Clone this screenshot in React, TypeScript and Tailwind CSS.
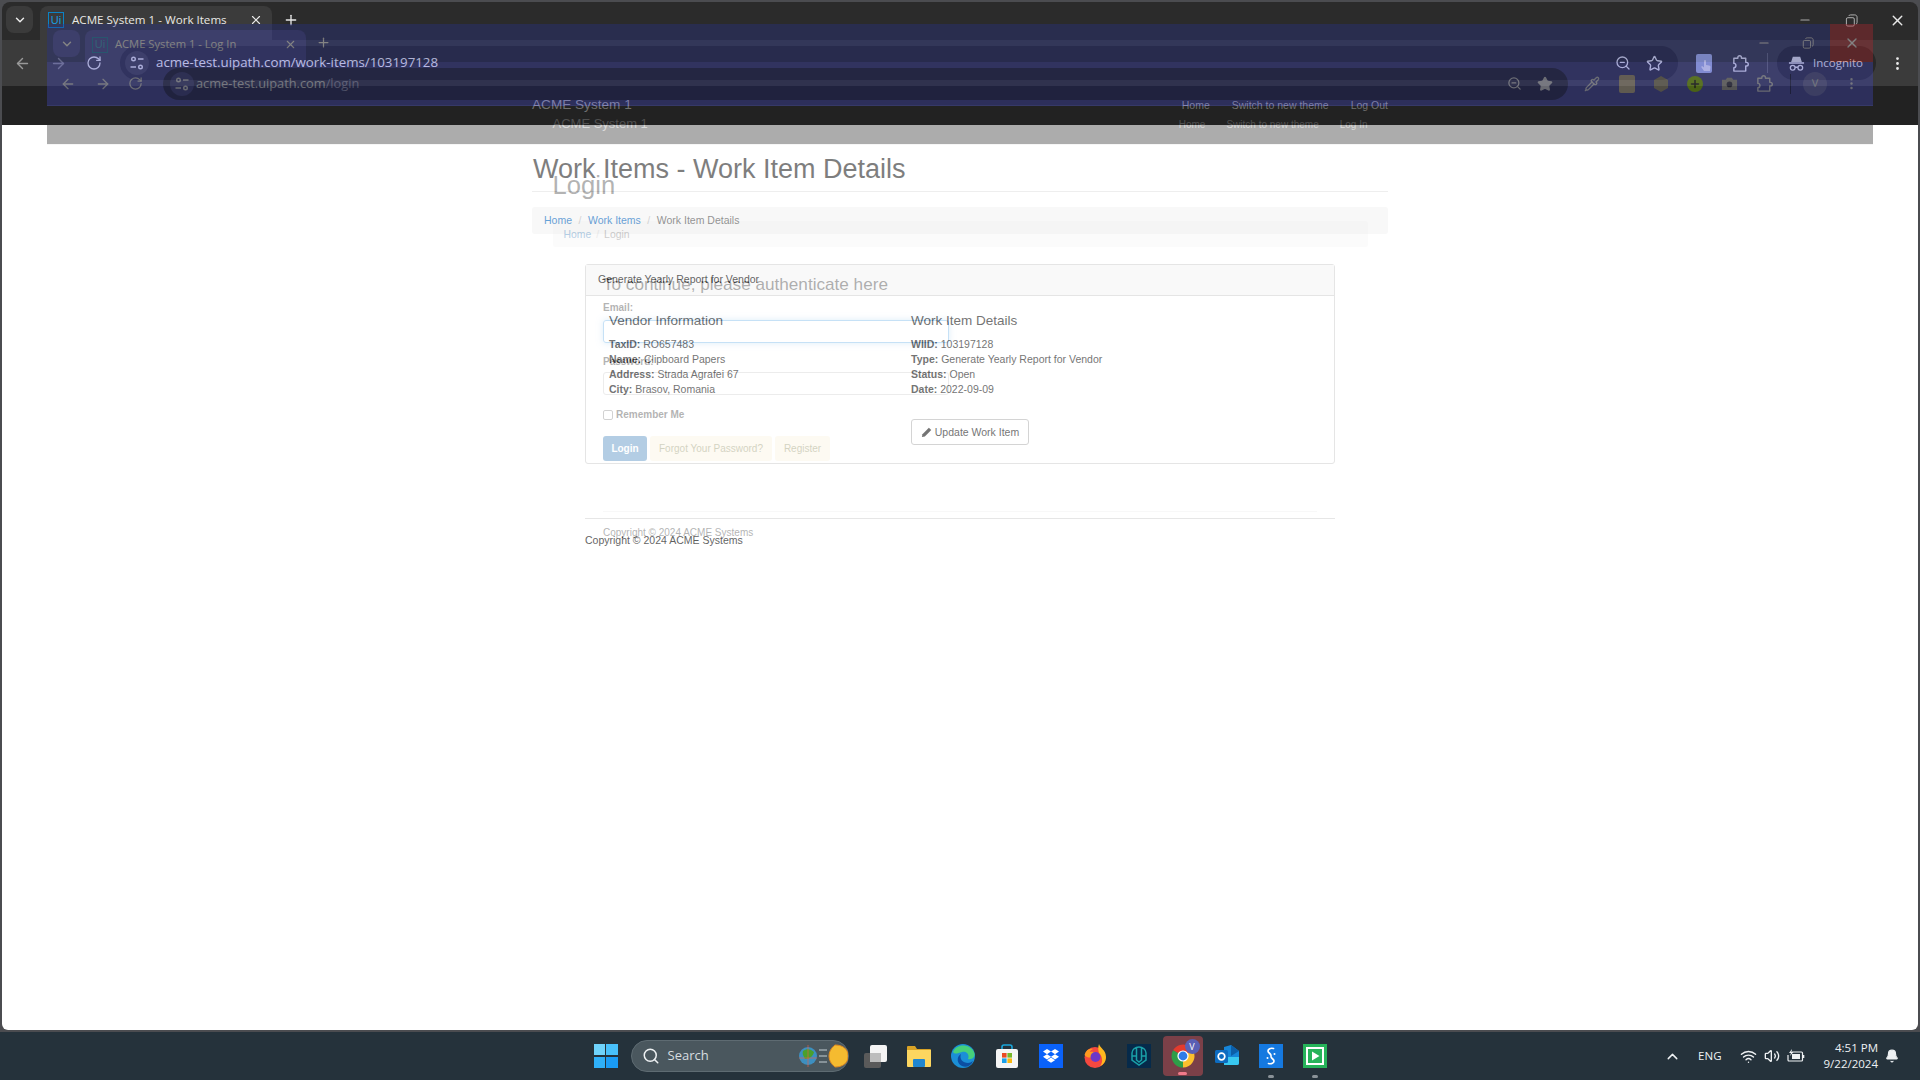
import {
  ArrowLeft, ArrowRight, Bell, ChevronDown, ChevronUp, EllipsisVertical,
  Minus, Pipette, Plus, RotateCw, Search, Star, Volume2, Wifi, X, ZoomOut,
} from "lucide-react";
import type { ReactNode } from "react";

const SANS = "font-['Liberation_Sans',Arial,sans-serif]";
const UI = "font-['Open_Sans','Noto_Sans',sans-serif]";

function Tune({ className }: { className?: string }) {
  return (
    <svg viewBox="0 0 16 16" className={className} fill="none" stroke="currentColor" strokeWidth="1.4">
      <circle cx="4.5" cy="4" r="1.8" />
      <path d="M9 4h5.5M1.500 12H7" />
      <circle cx="11.5" cy="12" r="1.8" />
    </svg>
  );
}

function Restore({ className }: { className?: string }) {
  return (
    <svg viewBox="0 0 14 14" className={className} fill="none" stroke="currentColor" strokeWidth="1">
      <rect x="1.5" y="4" width="8.5" height="9" rx="1.5" />
      <path d="M4 2.2C4.3 1.3 5 1 6 1h4.500C12 1 13 2 13 3.500V9c0 1-.4 1.700-1.300 2" />
    </svg>
  );
}

function Incognito({ className }: { className?: string }) {
  return (
    <svg viewBox="0 0 18 18" className={className} fill="none" stroke="currentColor" strokeWidth="1.4">
      <path d="M1 8.500h16" />
      <path d="M4 7.500 5.600 2.500h6.800L14 7.500" fill="currentColor" />
      <circle cx="5" cy="13.500" r="2.500" />
      <circle cx="13" cy="13.500" r="2.500" />
      <path d="M7.500 13h3" />
    </svg>
  );
}

function Extension({ className }: { className?: string }) {
  return (
    <svg viewBox="0 0 20 20" className={className} fill="none" stroke="currentColor" strokeWidth="1.500" strokeLinejoin="round">
      <path d="M3 4.500h4.200V3.700a1.900 1.900 0 0 1 3.800 0v.8h4.500v4.300h.8a1.900 1.900 0 0 1 0 3.800h-.8v5.400H3v-3.500c2.200 0 2.200-.9 2.200-2.300 0-1.400-.4-2.300-2.200-2.300Z" />
    </svg>
  );
}

function Favicon({ dim }: { dim?: boolean }) {
  return (
    <span className={`flex h-4 w-4 items-center justify-center border-[1.5px] border-[#0a84c6] text-[11px] leading-none ${SANS} ${dim ? "text-[#2aa0dc]" : "text-[#1a9ae0]"}`}>
      Ui
    </span>
  );
}

function Btn({ children, w = "w-9" }: { children: ReactNode; w?: string }) {
  return <span className={`flex h-8 shrink-0 items-center justify-center ${w}`}>{children}</span>;
}

/* bootstrap-ish page, the window that is actually in front */
function Page() {
  return (
    <div className={`flex-1 bg-white ${SANS}`}>
      <div className="mx-auto w-[856px]">
        <h1 className="mt-[27px] h-[34px] pl-px text-[27px] leading-[34px] text-[#333]">Work Items - Work Item Details</h1>
        <div className="mt-[5px] border-t border-[#e4e4e4]" />
        <div className="mt-[15px] flex h-[27px] items-center gap-[6.5px] rounded-[3px] bg-[#f5f5f5] px-3 text-[10.5px]">
          <span className="text-[#0a6ac0]">Home</span>
          <span className="text-[#bbb]">/</span>
          <span className="text-[#0a6ac0]">Work Items</span>
          <span className="text-[#bbb]">/</span>
          <span className="text-[#555]">Work Item Details</span>
        </div>
        <div className="mx-auto mt-[30px] h-[200px] w-[750px] rounded-[3px] border border-[#d6d6d6]">
          <div className="flex h-[31px] items-center border-b border-[#d6d6d6] bg-[#f7f7f7] px-3 text-[10.5px] text-black">
            Generate Yearly Report for Vendor
          </div>
          <div className="flex pl-[23px] text-[10.5px] leading-[15px] text-[#222]">
            <div className="w-[302px]">
              <h4 className="mt-[16px] h-[18px] text-[13.5px] leading-[18px] text-[#222]">Vendor Information</h4>
              <div className="mt-[7px]">
                <p><b>TaxID:</b> RO657483</p>
                <p><b>Name:</b> Clipboard Papers</p>
                <p><b>Address:</b> Strada Agrafei 67</p>
                <p><b>City:</b> Brasov, Romania</p>
              </div>
            </div>
            <div>
              <h4 className="mt-[16px] h-[18px] text-[13.5px] leading-[18px] text-[#222]">Work Item Details</h4>
              <div className="mt-[7px]">
                <p><b>WIID:</b> 103197128</p>
                <p><b>Type:</b> Generate Yearly Report for Vendor</p>
                <p><b>Status:</b> Open</p>
                <p><b>Date:</b> 2022-09-09</p>
              </div>
              <span className="mt-[22px] flex h-[26px] w-[118px] items-center justify-center gap-[3px] rounded-[3px] border border-[#bbb] text-[#222]">
                <svg viewBox="0 0 12 12" className="h-[11px] w-[11px]" fill="currentColor">
                  <path d="M8.600.8 11.200 3.400 4.200 10.400 1 11 1.600 7.800Z" />
                </svg>
                Update Work Item
              </span>
            </div>
          </div>
        </div>
        <div className="mx-auto mt-[54px] w-[750px] border-t border-[#d8d8d8] pt-[15px] text-[10.5px] leading-[13px] text-black">
          Copyright © 2024 ACME Systems
        </div>
      </div>
    </div>
  );
}

/* the second browser window fading out on top (window animation caught mid-way) */
function GhostWindow() {
  return (
    <div className="absolute left-[47px] top-[24px] flex h-[1006px] w-[1826px] flex-col opacity-[0.37]">
      <div className="relative flex h-[38px] shrink-0 items-start bg-[#28318c] text-white">
        <span className="ml-[6px] mt-[6px] flex h-[27px] w-[27px] items-center justify-center rounded-lg bg-[#4146bd]">
          <ChevronDown size={14} strokeWidth={2.5} />
        </span>
        <div className={`ml-[5px] mt-[6px] flex h-[32px] w-[221px] items-center rounded-t-lg bg-[#4146bd] pb-[3px] pl-[7px] text-[11.2px] ${UI}`}>
          <Favicon dim />
          <span className="ml-[7px] flex-1">ACME System 1 - Log In</span>
          <X size={13} className="mr-[9px]" />
        </div>
        <Plus size={15} className="ml-[10px] mt-[11px]" />
        <div className="ml-auto flex h-[38px] items-center">
          <Btn w="w-[44px]"><Minus size={14} /></Btn>
          <Btn w="w-[44px]"><Restore className="h-3 w-3" /></Btn>
          <span className="flex h-[38px] w-[43px] items-center justify-center bg-[#b3262f]"><X size={16} /></span>
        </div>
      </div>
      <div className="flex h-[44px] shrink-0 items-center border-b border-[#5a60e0] bg-[#4146bd] pl-[3px] text-[#dfe2f7]">
        <Btn><ArrowLeft size={16} /></Btn>
        <Btn w="w-[34px]"><ArrowRight size={16} /></Btn>
        <Btn w="w-[30px]"><RotateCw size={15} /></Btn>
        <div className="ml-[13px] flex h-8 w-[1405px] shrink-0 items-center rounded-full bg-[#1f2470] pl-[7px]">
          <span className="flex h-6 w-6 items-center justify-center rounded-full bg-[#3a3f9e]"><Tune className="h-4 w-4" /></span>
          <span className={`ml-[2px] flex-1 text-[12.8px] ${UI}`}>acme-test.uipath.com<span className="text-[#9ca0dd]">/login</span></span>
          <ZoomOut size={15} className="mr-[15px]" />
          <Star size={16} fill="currentColor" className="mr-[15px]" />
        </div>
        <Btn w="w-[48px]"><Pipette size={16} /></Btn>
        <Btn w="w-[22px]"><span className="h-[18px] w-[16px] rounded-[2px] bg-[#c9b9a0]" /></Btn>
        <Btn w="w-[46px]">
          <svg viewBox="0 0 18 18" className="h-[18px] w-[18px]"><path d="M9 1 16 5v8l-7 4-7-4V5Z" fill="#a09880" /></svg>
        </Btn>
        <Btn w="w-[22px]"><span className="flex h-[16px] w-[16px] items-center justify-center rounded-full bg-[#8fd000] text-[#111]"><Plus size={12} strokeWidth={3} /></span></Btn>
        <Btn w="w-[46px]">
          <svg viewBox="0 0 18 18" className="h-[17px] w-[17px]">
            <path d="M1 5h4l1.500-2h5L13 5h4v11H1Z" fill="#a8a8a8" />
            <circle cx="9" cy="10" r="3" fill="#2a2a50" />
          </svg>
        </Btn>
        <Btn w="w-[24px]"><Extension className="h-[19px] w-[19px]" /></Btn>
        <span className="ml-[14px] h-5 w-px bg-[#151a60]" />
        <span className={`ml-[12px] flex h-6 w-6 shrink-0 items-center justify-center rounded-full bg-[#6a6ed0] text-[11px] ${UI}`}>V</span>
        <Btn w="ml-[2px] w-[44px]"><EllipsisVertical size={15} /></Btn>
      </div>
      <div className={`flex h-[38px] shrink-0 items-center bg-[#222] pb-[2px] ${SANS} text-[#9d9d9d]`}>
        <div className="mx-auto flex w-[815px] items-center justify-between">
          <span className="text-[13px]">ACME System 1</span>
          <span className="flex gap-[21px] text-[10px]">
            <span>Home</span>
            <span>Switch to new theme</span>
            <span>Log In</span>
          </span>
        </div>
      </div>
      <div className={`flex-1 border-t border-[#e7e7e7] bg-white ${SANS}`}>
        <div className="mx-auto w-[815px]">
          <h1 className="mt-[25px] h-[30px] text-[25.6px] leading-[30px] text-[#333]">Login</h1>
          <div className="mt-[21px] flex h-[26px] items-center gap-[5px] rounded-[3px] bg-[#f5f5f5] pl-[11px] pt-[2px] text-[10.4px]">
            <span className="text-[#337ab7]">Home</span>
            <span className="text-[#ccc]">/</span>
            <span className="text-[#777]">Login</span>
          </div>
        </div>
        <div className="mx-auto w-[714px] text-[10px] leading-[12px] text-[#333]">
          <p className="mt-[26px] text-[17.15px] leading-[22px]">To continue, please authenticate here</p>
          <p className="mt-[7px] font-bold">Email:</p>
          <div className="mt-[6px] h-[23px] w-[346px] rounded-[3px] border border-[#66afe9] shadow-[0_0_6px_rgba(102,175,233,0.6)]" />
          <p className="mt-[13px] font-bold">Password:</p>
          <div className="mt-[4px] h-[23px] w-[346px] rounded-[3px] border border-[#ccc]" />
          <div className="mt-[15px] flex h-[10px] items-center gap-[3px] font-bold">
            <span className="h-[10px] w-[10px] rounded-[2px] border border-[#888]" />
            Remember Me
          </div>
          <div className="mt-[16px] flex h-[25px] gap-[3px]">
            <span className="flex w-[44px] items-center justify-center rounded-[3px] bg-[#337ab7] font-bold text-white">Login</span>
            <span className="flex w-[122px] items-center justify-center rounded-[3px] bg-[#fbf2dc] text-[#8a8a5a]">Forgot Your Password?</span>
            <span className="flex w-[55px] items-center justify-center rounded-[3px] bg-[#fbf2dc] text-[#8a8a5a]">Register</span>
          </div>
          <div className="mt-[50px] border-t border-[#eee] pt-[15px]">Copyright © 2024 ACME Systems</div>
        </div>
      </div>
    </div>
  );
}

function Chrome() {
  return (
    <svg viewBox="0 0 24 24" className="h-6 w-6">
      <circle cx="12" cy="12" r="7.500" fill="none" stroke="#e33b2e" strokeWidth="8" strokeDasharray="15.700 31.400" transform="rotate(-150 12 12)" />
      <circle cx="12" cy="12" r="7.500" fill="none" stroke="#fbc02d" strokeWidth="8" strokeDasharray="15.700 31.400" transform="rotate(-30 12 12)" />
      <circle cx="12" cy="12" r="7.500" fill="none" stroke="#2e9e48" strokeWidth="8" strokeDasharray="15.700 31.400" transform="rotate(90 12 12)" />
      <circle cx="12" cy="12" r="5.600" fill="#fff" />
      <circle cx="12" cy="12" r="4.400" fill="#2f7ce8" />
    </svg>
  );
}

const taskIcons: ReactNode[] = [
  // task view
  <svg key="tv" viewBox="0 0 24 24" className="h-6 w-6">
    <rect x="1" y="9" width="17" height="15" rx="2" fill="#5a5a5a" />
    <rect x="7" y="1" width="17" height="17" rx="2" fill="#f4f4f4" />
    <rect x="7" y="9" width="11" height="9" fill="#bdbdbd" />
  </svg>,
  // explorer
  <svg key="fx" viewBox="0 0 24 24" className="h-6 w-6">
    <path d="M0 3a1 1 0 0 1 1-1h7l2 3h13a1 1 0 0 1 1 1v4H0Z" fill="#d9a326" />
    <path d="M0 6h24v16a1 1 0 0 1-1 1H1a1 1 0 0 1-1-1Z" fill="#fcd660" />
    <rect x="6" y="15" width="12" height="8" rx="1" fill="#1f86d0" />
  </svg>,
  // edge
  <svg key="ed" viewBox="0 0 24 24" className="h-6 w-6">
    <circle cx="12" cy="12" r="12" fill="#1b8fd6" />
    <path d="M2 8C5 0 18-1 23 8c2 5-2 8-6 7 2-5-2-8-6-7-4 1-7 3-9 0Z" fill="#46d07a" />
    <path d="M11 22C6 20 5 13 10 10c-2 5 2 9 7 9 2 0 3-1 5-2-2 5-7 7-11 5Z" fill="#0c4fa3" />
  </svg>,
  // store
  <svg key="st" viewBox="0 0 24 24" className="h-6 w-6">
    <path d="M7 6V3a2 2 0 0 1 2-2h6a2 2 0 0 1 2 2v3" fill="none" stroke="#1aa7dc" strokeWidth="1.600" />
    <rect x="1" y="5" width="22" height="19" rx="2" fill="#f5f5f5" />
    <rect x="7" y="9" width="4.600" height="4.600" fill="#ea4a24" />
    <rect x="12.400" y="9" width="4.600" height="4.600" fill="#78b82a" />
    <rect x="7" y="14.400" width="4.600" height="4.600" fill="#1aa0ea" />
    <rect x="12.400" y="14.400" width="4.600" height="4.600" fill="#fab810" />
  </svg>,
  // dropbox
  <svg key="db" viewBox="0 0 24 24" className="h-6 w-6">
    <rect width="24" height="24" fill="#0a62fa" />
    <path d="M8 5 12 7.600 8 10.200 4 7.600ZM16 5l4 2.600-4 2.600-4-2.600ZM8 10.200l4 2.600-4 2.600-4-2.600ZM16 10.200l4 2.600-4 2.600-4-2.600ZM12 13.600l4 2.600-4 2.600-4-2.600Z" fill="#fff" />
  </svg>,
  // firefox
  <svg key="ff" viewBox="0 0 24 24" className="h-6 w-6">
    <circle cx="12" cy="13.500" r="10.500" fill="#f5483f" />
    <path d="M16 0c1 4 7 6 7 13 0 5-3 8-6 9 3-3 3-9-1-13-1-3-1-6 0-9Z" fill="#ffb81f" />
    <path d="M1.500 11C3 6 6 4 10 5c-2 1-3 2-3 3 3-1 6 0 8 3-2-1-5 0-5 2-3 1-6 1-8.500-2Z" fill="#ff9a1f" />
    <circle cx="12.500" cy="13" r="5" fill="#6d37c8" />
  </svg>,
  // dark blue app
  <svg key="bl" viewBox="0 0 24 24" className="h-6 w-6">
    <rect width="24" height="24" fill="#062a4a" />
    <path d="M5 9a7 6 0 0 1 14 0v7l-7 5-7-5ZM9.500 4v12l2.500 2 2.500-2V4M5 12h4.500M14.500 12H19" fill="none" stroke="#1aa0a8" strokeWidth="1.500" />
  </svg>,
];

const trailingIcons: ReactNode[] = [
  // outlook
  <svg key="ol" viewBox="0 0 24 24" className="h-6 w-6">
    <path d="M9 3 16 1l8 6v12a2 2 0 0 1-2 2H9Z" fill="#1585d8" />
    <path d="M9 13h15v6a2 2 0 0 1-2 2H9Z" fill="#38c8f0" />
    <path d="M16 1l8 6-8 5Z" fill="#0c5ea8" />
    <rect y="6" width="13" height="13" rx="1.500" fill="#0d6cc0" />
    <circle cx="6.500" cy="12.500" r="3.300" fill="none" stroke="#fff" strokeWidth="1.700" />
  </svg>,
  // s app
  <svg key="s" viewBox="0 0 24 24" className="h-6 w-6">
    <rect width="24" height="24" fill="#1579e0" />
    <path d="M14.500 4.500c-3-.8-5.500.5-5.500 2.500 0 2 3 2.500 3 4.500M12 12.500c0 2 3 2.500 3 4.500s-2.500 3.300-5.500 2.500" fill="none" stroke="#fff" strokeWidth="1.700" strokeLinecap="round" />
    <circle cx="8.500" cy="14" r="1" fill="#fff" />
    <circle cx="15.500" cy="10" r="1" fill="#fff" />
  </svg>,
  // green player
  <svg key="gr" viewBox="0 0 24 24" className="h-6 w-6">
    <rect width="24" height="24" fill="#26b35a" />
    <rect x="3" y="3" width="18" height="18" fill="#fff" />
    <rect x="5" y="5" width="14" height="14" fill="#26b35a" />
    <path d="M9 7.500 16.500 12 9 16.500Z" fill="#fff" />
  </svg>,
];

function TaskSlot({ children, running }: { children: ReactNode; running?: boolean }) {
  return (
    <span className="relative flex h-12 w-[44px] items-center justify-center">
      {children}
      {running && <span className="absolute bottom-[2px] h-[3px] w-[6px] rounded-full bg-[#8a9298]" />}
    </span>
  );
}

function Taskbar() {
  return (
    <div className={`grid h-12 shrink-0 grid-cols-[1fr_auto_1fr] items-center bg-[#25323b] text-[#eef1f3] ${UI}`}>
      <div />
      <div className="flex items-center">
        <TaskSlot>
          <span className="grid h-6 w-6 grid-cols-2 gap-[1.500px]">
            <i className="bg-[#6fd3fb]" />
            <i className="bg-[#48c0fa]" />
            <i className="bg-[#2fb0f8]" />
            <i className="bg-[#1a9cf5]" />
          </span>
        </TaskSlot>
        <div className="ml-[3px] mr-[4px] flex h-8 w-[218px] items-center rounded-full border border-[#5e6b72] bg-[#4a575e] pl-[10px]">
          <Search size={18} />
          <span className="ml-[8px] flex-1 text-[13px] text-[#d8dde0]">Search</span>
          <svg viewBox="0 0 50 24" className="h-6 w-[50px] shrink-0">
            <circle cx="10" cy="12" r="9" fill="#3d8fc0" />
            <path d="M5 7c4-3 8-2 11 1-1 4-4 7-9 7-1-3-3-4-2-8Z" fill="#4aa02c" />
            <path d="M10 1v22M1 14h18" stroke="#f06040" strokeWidth="0.600" />
            <path d="M21 6h8M21 12h8M21 18h8" stroke="#9aa6ac" strokeWidth="1.500" />
            <path d="M50 12c0 7-5 11-13 11-4-3-6-7-6-11s2-8 6-11c8 0 13 4 13 11Z" fill="#f5bb30" stroke="#e08a20" />
          </svg>
        </div>
        {taskIcons.map((icon, i) => (
          <TaskSlot key={i}>{icon}</TaskSlot>
        ))}
        <span className="relative mx-[2px] flex h-10 w-[40px] items-center justify-center rounded-[4px] bg-[#7b4048]">
          <Chrome />
          <span className="absolute right-[3px] top-[3px] flex h-[15px] w-[15px] items-center justify-center rounded-full bg-[#5a60b4] text-[9px] text-white">V</span>
          <span className="absolute bottom-[1px] h-[3px] w-[9px] rounded-full bg-[#f07a8a]" />
        </span>
        {trailingIcons.map((icon, i) => (
          <TaskSlot key={i} running={i > 0}>{icon}</TaskSlot>
        ))}
      </div>
      <div className="flex items-center justify-end pr-[21px] text-[11.500px]">
        <ChevronUp size={17} className="mr-[17px]" />
        <span className="mr-[18px]">ENG</span>
        <Wifi size={17} className="mr-[7px]" />
        <Volume2 size={16} className="mr-[7px]" />
        {/* battery with the little charge bolt in its corner */}
        <svg viewBox="0 0 18 14" className="mr-[19px] h-[14px] w-[18px]" fill="none" stroke="currentColor" strokeWidth="1.200">
          <path d="M5 3h9.500a1 1 0 0 1 1 1v7a1 1 0 0 1-1 1H2a1 1 0 0 1-1-1V6" />
          <path d="M16.500 6v3" strokeWidth="1.600" />
          <path d="M5 0 2 4h2L3 7l3.500-4h-2Z" fill="currentColor" stroke="none" />
          <rect x="5" y="5" width="8" height="5" fill="currentColor" stroke="none" />
        </svg>
        <span className="mr-[7px] text-right leading-[16px]">
          4:51 PM<br />9/22/2024
        </span>
        <Bell size={14} fill="currentColor" />
      </div>
    </div>
  );
}

export default function App() {
  return (
    <div className="relative flex h-[1080px] w-[1920px] flex-col overflow-hidden bg-[#25323b]">
      <div className="flex h-[1032px] shrink-0 flex-col bg-[#4b4c50] p-[2px]">
        <div className="flex flex-1 flex-col overflow-hidden rounded-t-[8px] rounded-b-[6px] bg-[#2b2b2b]">
          {/* tab strip */}
          <div className="flex h-[38px] shrink-0 items-start text-[#e8e8e8]">
            <span className="ml-[4px] mt-[4px] flex h-[27px] w-[27px] items-center justify-center rounded-lg bg-[#3b3b3b]">
              <ChevronDown size={14} strokeWidth={2.5} />
            </span>
            <div className={`ml-[7px] mt-[4px] flex h-[34px] w-[232px] items-center rounded-t-lg bg-[#3b3b3b] pb-[6px] pl-[8px] text-[11.6px] ${UI}`}>
              <Favicon />
              <span className="ml-[8px] flex-1">ACME System 1 - Work Items</span>
              <X size={14} className="mr-[9px]" />
            </div>
            <Plus size={16} className="ml-[11px] mt-[10px]" />
            <div className="ml-auto flex h-[36px] items-center">
              <Btn w="w-[46px]"><Minus size={14} className="text-[#aaa]" /></Btn>
              <Btn w="w-[46px]"><Restore className="h-[13px] w-[13px] text-[#bbb]" /></Btn>
              <Btn w="ml-[2px] w-[42px]"><X size={17} /></Btn>
            </div>
          </div>
          {/* toolbar */}
          <div className="flex h-[46px] shrink-0 items-center bg-[#3b3b3b] pl-[2px] text-[#eaeaea]">
            <Btn><ArrowLeft size={17} className="text-[#999]" /></Btn>
            <Btn><ArrowRight size={17} className="text-[#888]" /></Btn>
            <Btn><RotateCw size={16} /></Btn>
            <div className="ml-[8px] flex h-[34px] w-[1558px] shrink-0 items-center rounded-full bg-[#282828] pl-[5px]">
              <span className="flex h-6 w-6 items-center justify-center rounded-full bg-[#3b3b3b]"><Tune className="h-4 w-4" /></span>
              <span className={`ml-[7px] flex-1 text-[13.3px] text-white ${UI}`}>acme-test.uipath.com/work-items/103197128</span>
              <ZoomOut size={16} className="mr-[15px]" />
              <Star size={17} className="mr-[15px]" />
            </div>
            <Btn w="relative w-[52px]">
              <span className="h-[19px] w-[16px] rounded-[2px] bg-[#a9b6e0]" />
              <svg viewBox="0 0 10 12" className="absolute left-[23px] top-[13px] h-[12px] w-[10px]" fill="#eef0fa">
                <path d="M3 1a1 1 0 0 1 2 0v4l3 .6c1 .2 1.500.8 1.500 1.600L9 11H3L.5 7.500C0 6.500 1 6 1.800 6.600L3 7.500Z" />
              </svg>
            </Btn>
            <Btn w="w-[20px]"><Extension className="h-[19px] w-[19px]" /></Btn>
            <span className="ml-[17px] h-5 w-px bg-[#666]" />
            <div className={`ml-[9px] flex h-[34px] w-[99px] shrink-0 items-center gap-[8px] rounded-full bg-[#282828] pl-[11px] text-[11.5px] ${UI}`}>
              <Incognito className="h-[17px] w-[17px] shrink-0" />
              Incognito
            </div>
            <Btn w="w-[42px]"><EllipsisVertical size={17} /></Btn>
          </div>
          {/* navbar */}
          <div className={`flex h-[39px] shrink-0 items-center bg-[#222] text-[#9d9d9d] ${SANS}`}>
            <div className="mx-auto flex w-[856px] items-center justify-between">
              <span className="text-[13.6px]">ACME System 1</span>
              <span className="flex gap-[22px] text-[10.5px]">
                <span>Home</span>
                <span>Switch to new theme</span>
                <span>Log Out</span>
              </span>
            </div>
          </div>
          <Page />
        </div>
      </div>
      <Taskbar />
      <GhostWindow />
    </div>
  );
}
